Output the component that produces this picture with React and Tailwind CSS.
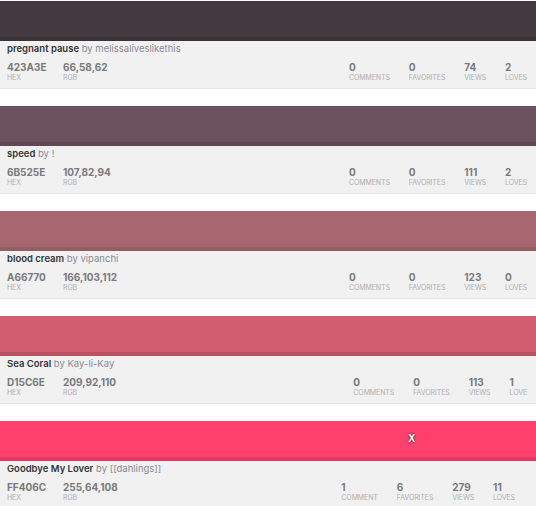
const palettes = [
  { title: 'pregnant pause', user: 'melissaliveslikethis', hex: '423A3E', rgb: '66,58,62', color: '#423A3E', comments: 0, favorites: 0, views: 74, loves: 2 },
  { title: 'speed', user: '!', hex: '6B525E', rgb: '107,82,94', color: '#6B525E', comments: 0, favorites: 0, views: 111, loves: 2 },
  { title: 'blood cream', user: 'vipanchi', hex: 'A66770', rgb: '166,103,112', color: '#A66770', comments: 0, favorites: 0, views: 123, loves: 0 },
  { title: 'Sea Coral', user: 'Kay-li-Kay', hex: 'D15C6E', rgb: '209,92,110', color: '#D15C6E', comments: 0, favorites: 0, views: 113, loves: 1 },
  { title: 'Goodbye My Lover', user: '[[dahlings]]', hex: 'FF406C', rgb: '255,64,108', color: '#FF406C', comments: 1, favorites: 6, views: 279, loves: 11, active: true },
];

function Stat({ value, label }) {
  return (
    <div className="flex flex-col">
      <span className="text-[10px] leading-[12px] font-bold text-[#7a7a7a]">{value}</span>
      <span className="text-[7px] leading-[8px] mt-[1px] uppercase tracking-[-0.1px] text-[#b0b0b0]">{label}</span>
    </div>
  );
}

function Card({ p }) {
  return (
    <div className="mb-[17px] first:mt-[0.5px]">
      <div className="h-[40px] flex items-center border-b-[4px] border-black/10" style={{ backgroundColor: p.color }}>
        {p.active && (
          <span className="ml-[408px] text-[10px] font-bold text-white [text-shadow:0_0_2px_#000]">X</span>
        )}
      </div>
      <div className="bg-[#f1f1f1] h-[48px] px-[7px] pt-[1px] border-b border-[#e6e6e6]">
        <div className="text-[9.5px] leading-[14px]">
          <span className="font-semibold text-[#333]">{p.title}</span>{' '}
          <span className="text-[#8a8a94]">by {p.user}</span>
        </div>
        <div className="flex items-start mt-[5px]">
          <div className="w-[56px]"><Stat value={p.hex} label="hex" /></div>
          <Stat value={p.rgb} label="rgb" />
          <div className={'ml-auto flex gap-[19px] ' + (p.active ? 'mr-[14px]' : 'mr-[2px]')}>
            <Stat value={p.comments} label={p.comments === 1 ? 'comment' : 'comments'} />
            <Stat value={p.favorites} label={p.favorites === 1 ? 'favorite' : 'favorites'} />
            <Stat value={p.views} label="views" />
            <Stat value={p.loves} label={p.loves === 1 ? 'love' : 'loves'} />
          </div>
        </div>
      </div>
    </div>
  );
}

export default function App() {
  return (
    <div className="w-[536px] h-[506px] overflow-hidden bg-white" style={{ fontFamily: 'Inter, "Noto Sans", sans-serif' }}>
      {palettes.map(p => <Card key={p.hex} p={p} />)}
    </div>
  );
}
